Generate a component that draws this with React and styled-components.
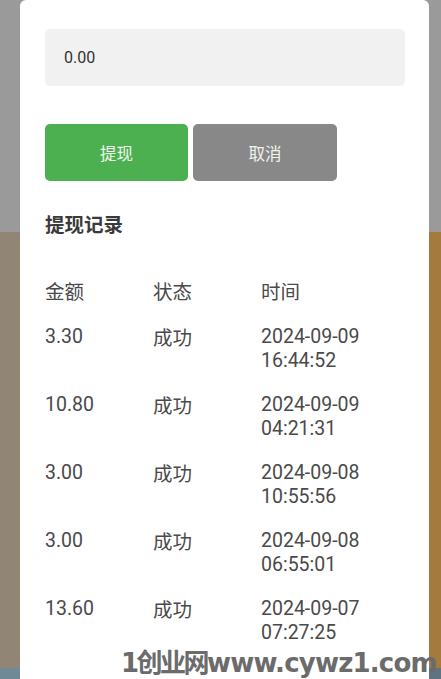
import React from "react";
import styled, { createGlobalStyle } from "styled-components";

const Global = createGlobalStyle`
  html, body, #root { margin: 0; padding: 0; height: 100%; }
  body { font-family: Roboto, "Noto Sans CJK SC", sans-serif; }
  * { box-sizing: border-box; }
`;

const Page = styled.div`
  position: relative;
  height: 100vh;
  overflow: hidden;
  display: flex;
  flex-direction: column;
`;

const TopBand = styled.div`
  height: 232px;
  background: #9a9a9a;
`;

const MidBand = styled.div`
  flex: 1;
  background: linear-gradient(to right, #918676 0 50%, #a57a3e 50% 100%);
`;

const BottomBand = styled.div`
  height: 11px;
  background: linear-gradient(to right, #6f8a96 0 50%, #5f7480 50% 100%);
`;

const Modal = styled.div`
  position: absolute;
  top: 0;
  left: 20px;
  width: 409px;
  bottom: 0;
  background: #ffffff;
  border-radius: 6px 6px 0 0;
  padding: 29px 24px 0 25px;
  display: flex;
  flex-direction: column;
`;

const AmountInput = styled.input`
  height: 57px;
  width: 100%;
  border: none;
  outline: none;
  border-radius: 5px;
  background: #f1f1f1;
  padding: 0 0 0 19px;
  font-family: Roboto, "Noto Sans CJK SC", sans-serif;
  font-size: 16px;
  color: #333;
`;

const ButtonRow = styled.div`
  display: flex;
  gap: 5px;
  margin-top: 38px;
`;

const Button = styled.button`
  width: ${(p) => p.$w}px;
  height: 57px;
  border: none;
  border-radius: 5px;
  background: ${(p) => p.$bg};
  color: #eef5ee;
  font-family: Roboto, "Noto Sans CJK SC", sans-serif;
  font-size: 16.5px;
  padding: 0;
`;

const Title = styled.div`
  margin-top: 33px;
  font-size: 19.5px;
  line-height: 24px;
  font-weight: 700;
  color: #3a3a3a;
`;

const Table = styled.div`
  margin-top: 33px;
  display: grid;
  grid-template-columns: 108px 108px 1fr;
  font-size: 19.5px;
  line-height: 24px;
  color: #4a4a4a;
`;

const Cell = styled.div`
  padding: 10px 0;
  padding-top: ${(p) => (p.$cjk ? "12px" : "10px")};
  padding-bottom: ${(p) => (p.$cjk ? "8px" : "10px")};
`;

const Line = styled.div``;

const Watermark = styled.div`
  position: absolute;
  left: 121px;
  bottom: 1px;
  white-space: nowrap;
  font-family: "DejaVu Sans", "Noto Sans CJK SC", sans-serif;
  font-weight: 700;
  font-size: 26px;
  line-height: 30px;
  color: #6b6b6b;
  letter-spacing: -0.8px;
`;

const WmCjk = styled.span`
  letter-spacing: -2.5px;
`;

const rows = [
  ["3.30", "成功", "2024-09-09", "16:44:52"],
  ["10.80", "成功", "2024-09-09", "04:21:31"],
  ["3.00", "成功", "2024-09-08", "10:55:56"],
  ["3.00", "成功", "2024-09-08", "06:55:01"],
  ["13.60", "成功", "2024-09-07", "07:27:25"],
];

export default function App() {
  return (
    <>
      <Global />
      <Page>
        <TopBand />
        <MidBand />
        <BottomBand />
        <Modal>
          <AmountInput defaultValue="0.00" readOnly />
          <ButtonRow>
            <Button $w={143} $bg="#4caf50">提现</Button>
            <Button $w={144} $bg="#888888">取消</Button>
          </ButtonRow>
          <Title>提现记录</Title>
          <Table>
            <Cell>金额</Cell>
            <Cell>状态</Cell>
            <Cell>时间</Cell>
            {rows.map((r, i) => (
              <React.Fragment key={i}>
                <Cell>{r[0]}</Cell>
                <Cell $cjk>{r[1]}</Cell>
                <Cell>
                  <Line>{r[2]}</Line>
                  <Line>{r[3]}</Line>
                </Cell>
              </React.Fragment>
            ))}
          </Table>
        </Modal>
        <Watermark>
          <WmCjk>1创业网</WmCjk>www.cywz1.com
        </Watermark>
      </Page>
    </>
  );
}
